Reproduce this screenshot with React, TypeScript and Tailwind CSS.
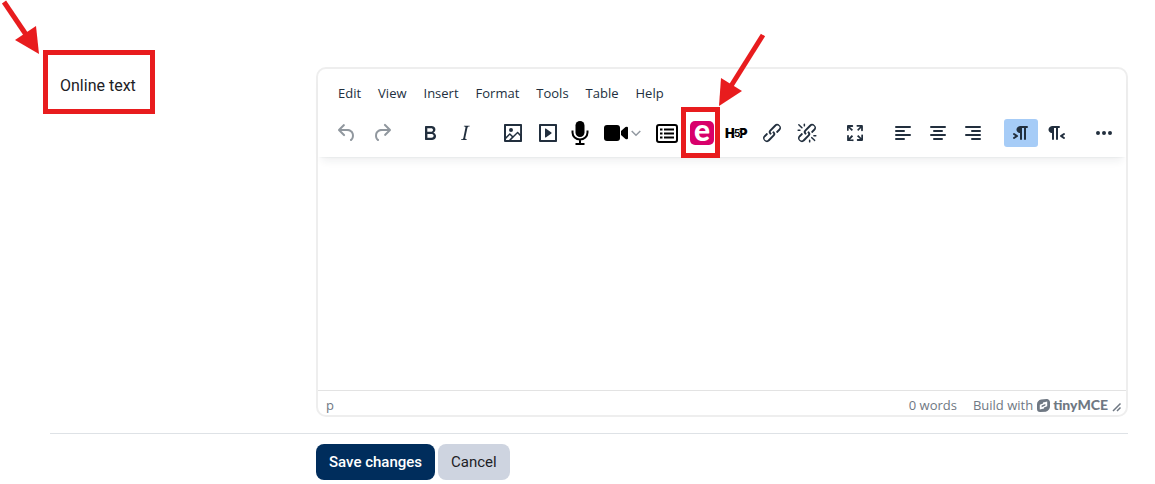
import type { ReactNode } from 'react';

interface ToolButtonProps {
  label: string;
  active?: boolean;
  disabled?: boolean;
  wide?: string;
  children: ReactNode;
}

const ICONS = {
  undo: 'M6.4 8H12c3.7 0 6.2 2 6.8 5.1.6 2.7-.4 5.6-2.3 6.8a1 1 0 0 1-1-1.8c1.1-.6 1.8-2.7 1.4-4.6-.5-2.1-2.1-3.5-4.9-3.5H6.4l3.3 3.3a1 1 0 1 1-1.4 1.4l-5-5a1 1 0 0 1 0-1.4l5-5a1 1 0 0 1 1.4 1.4L6.4 8Z',
  redo: 'M17.6 10H12c-2.8 0-4.4 1.4-4.9 3.5-.4 2 .3 4 1.4 4.6a1 1 0 1 1-1 1.8c-2-1.2-2.9-4.1-2.3-6.8.6-3 3-5.1 6.8-5.1h5.6l-3.3-3.3a1 1 0 1 1 1.4-1.4l5 5a1 1 0 0 1 0 1.4l-5 5a1 1 0 0 1-1.4-1.4l3.3-3.3Z',
  bold: 'M7.8 19c-.3 0-.5 0-.6-.2l-.2-.5V5.7c0-.2 0-.4.2-.5l.6-.2h5c1.5 0 2.7.3 3.5 1 .7.6 1.1 1.4 1.1 2.5a3 3 0 0 1-.6 1.9c-.4.6-1 1-1.6 1.2.4.1.9.3 1.3.6s.8.7 1 1.2c.4.4.5 1 .5 1.6 0 1.3-.4 2.3-1.3 3-.8.7-2.1 1-3.8 1H7.8Zm5-8.3c.6 0 1.2-.1 1.6-.5.4-.3.6-.7.6-1.3 0-1.1-.8-1.7-2.3-1.7H9.3v3.5h3.4Zm.5 6c.7 0 1.3-.1 1.7-.4.4-.4.6-.9.6-1.5s-.2-1-.7-1.4c-.4-.3-1-.4-2-.4H9.4v3.8h4Z',
  italic: 'm16.7 4.7-.1.9h-.3c-.6 0-1 0-1.4.3-.3.3-.4.6-.5 1.1l-2.1 9.8v.6c0 .5.4.8 1.4.8h.2l-.2.8H8l.2-.8h.2c1.1 0 1.8-.5 2-1.5l2-9.8.1-.5c0-.6-.4-.8-1.4-.8h-.3l.2-.9h5.8Z',
  image: 'm5 15.7 3.3-3.2c.3-.3.7-.3 1 0L12 15l4.1-4c.3-.4.8-.4 1 0l2 1.9V5H5v10.7ZM5 18V19h3l2.8-2.9-2-2L5 17.9Zm14-3-2.5-2.4-6.4 6.5H19v-4ZM4 3h16c.6 0 1 .4 1 1v16c0 .6-.4 1-1 1H4a1 1 0 0 1-1-1V4c0-.6.4-1 1-1Zm6 8a2 2 0 1 0 0-4 2 2 0 0 0 0 4Z',
  media: 'M4 3h16c.6 0 1 .4 1 1v16c0 .6-.4 1-1 1H4a1 1 0 0 1-1-1V4c0-.6.4-1 1-1Zm1 2v14h14V5H5Zm4.8 2.6 5.6 4a.5.5 0 0 1 0 .8l-5.6 4A.5.5 0 0 1 9 16V8a.5.5 0 0 1 .8-.4Z',
  link: 'M6.2 12.3a1 1 0 0 1 1.4 1.4l-2 2a2 2 0 1 0 2.6 2.8l4.8-4.8a1 1 0 0 0 0-1.4 1 1 0 1 1 1.4-1.3 2.9 2.9 0 0 1 0 4L9.6 20a3.9 3.9 0 0 1-5.5-5.5l2-2Zm11.6-.6a1 1 0 0 1-1.4-1.4l2-2a2 2 0 1 0-2.6-2.8L11 10.3a1 1 0 0 0 0 1.4A1 1 0 1 1 9.6 13a2.9 2.9 0 0 1 0-4L14.4 4a3.9 3.9 0 0 1 5.5 5.5l-2 2Z',
  breaks: 'M7.6 6.3a.8.8 0 0 1-1 1.1L3.3 4.2a.7.7 0 1 1 1-1l3.2 3.1ZM5.1 8.6a.8.8 0 0 1 0 1.5H3a.8.8 0 0 1 0-1.5H5Zm5-3.5a.8.8 0 0 1-1.5 0V3a.8.8 0 0 1 1.5 0V5Zm6 11.8a.8.8 0 0 1 1-1l3.2 3.2a.8.8 0 0 1-1 1L16 17Zm-2.2 2a.8.8 0 0 1 1.5 0V21a.8.8 0 0 1-1.5 0V19Zm5-3.5a.7.7 0 1 1 0-1.5H21a.8.8 0 0 1 0 1.5H19Z',
  fullscreen: 'm15.3 10-1.2-1.3 2.9-3h-2.3a.9.9 0 1 1 0-1.7H19c.5 0 .9.4.9.9v4.4a.9.9 0 1 1-1.8 0V7l-2.9 3Zm0 4 3 3v-2.3a.9.9 0 1 1 1.7 0V19c0 .5-.4.9-.9.9h-4.4a.9.9 0 1 1 0-1.8H17l-3-2.9 1.3-1.2ZM10 15.4l-2.9 3h2.3a.9.9 0 1 1 0 1.7H5a.9.9 0 0 1-.9-.9v-4.4a.9.9 0 1 1 1.8 0V17l2.9-3 1.2 1.3ZM8.7 10 5.7 7v2.3a.9.9 0 0 1-1.7 0V5c0-.5.4-.9.9-.9h4.4a.9.9 0 0 1 0 1.8H7l3 2.9-1.3 1.2Z',
  alignLeft: 'M5 5h14a1 1 0 0 1 0 2H5a1 1 0 1 1 0-2Zm0 4h8a1 1 0 0 1 0 2H5a1 1 0 1 1 0-2Zm0 8h8a1 1 0 0 1 0 2H5a1 1 0 0 1 0-2Zm0-4h14a1 1 0 0 1 0 2H5a1 1 0 0 1 0-2Z',
  alignCenter: 'M5 5h14a1 1 0 0 1 0 2H5a1 1 0 1 1 0-2Zm3 4h8a1 1 0 0 1 0 2H8a1 1 0 1 1 0-2Zm0 8h8a1 1 0 0 1 0 2H8a1 1 0 0 1 0-2Zm-3-4h14a1 1 0 0 1 0 2H5a1 1 0 0 1 0-2Z',
  alignRight: 'M5 5h14a1 1 0 0 1 0 2H5a1 1 0 1 1 0-2Zm6 4h8a1 1 0 0 1 0 2h-8a1 1 0 0 1 0-2Zm0 8h8a1 1 0 0 1 0 2h-8a1 1 0 0 1 0-2Zm-6-4h14a1 1 0 0 1 0 2H5a1 1 0 0 1 0-2Z',
  ltr: 'M11 5h7a1 1 0 0 1 0 2h-1v11a1 1 0 0 1-2 0V7h-2v11a1 1 0 0 1-2 0v-6c-.5 0-1 0-1.4-.3A3.4 3.4 0 0 1 7.8 10a3.3 3.3 0 0 1 0-2.8 3.4 3.4 0 0 1 1.8-1.8L11 5ZM4.4 16.2 6.2 15l-1.8-1.2a1 1 0 0 1 1.2-1.6l3 2a1 1 0 0 1 0 1.6l-3 2a1 1 0 1 1-1.2-1.6Z',
  rtl: 'M8 5h7a1 1 0 0 1 0 2h-1v11a1 1 0 0 1-2 0V7h-2v11a1 1 0 0 1-2 0v-6c-.5 0-1 0-1.4-.3A3.4 3.4 0 0 1 4.8 10a3.3 3.3 0 0 1 0-2.8 3.4 3.4 0 0 1 1.8-1.8L8 5Zm12.600 11.200L18.800 15l1.800-1.200a1 1 0 0 0-1.200-1.600l-3 2a1 1 0 0 0 0 1.600l3 2a1 1 0 1 0 1.200-1.600Z',
  more: 'M6 10a2 2 0 1 0 0 4 2 2 0 0 0 0-4Zm12 0a2 2 0 1 0 0 4 2 2 0 0 0 0-4Zm-6 0a2 2 0 1 0 0 4 2 2 0 0 0 0-4Z',
};

const MENUS = ['Edit', 'View', 'Insert', 'Format', 'Tools', 'Table', 'Help'];

function Icon({ d }: { d: string }) {
  return (
    <svg width="24" height="24" viewBox="0 0 24 24" fill="currentColor" fillRule="evenodd" aria-hidden="true">
      <path d={d} />
    </svg>
  );
}

function ToolButton({ label, active, disabled, wide = 'w-[34px]', children }: ToolButtonProps) {
  return (
    <button
      type="button"
      aria-label={label}
      aria-pressed={active}
      disabled={disabled}
      className={`flex h-7 shrink-0 items-center justify-center rounded-[3px] ${wide} ${
        active ? 'bg-[#a6ccf7]' : ''
      } ${disabled ? 'text-[#222f3e]/50' : 'text-[#222f3e]'}`}
    >
      {children}
    </button>
  );
}

function Group({ children }: { children: ReactNode }) {
  return <div className="flex gap-px">{children}</div>;
}

function Logo() {
  return (
    <a href="#tinymce" aria-label="tinyMCE" className="flex items-center gap-[3px] text-[#6f7883]">
      <svg width="13" height="13" viewBox="0 0 13 13" aria-hidden="true">
        <path
          d="M4.2.4 9.5 0A3.3 3.3 0 0 1 13 3.400v4.200c0 1.800-1 3.500-2.600 4.300L8.800 12.700 3.400 13A3.300 3.300 0 0 1 0 9.700V5.200C0 2.800 1.800.8 4.200.4Z"
          fill="currentColor"
        />
        <path d="M2.800 5.800 6 4.600V3.400l4.200 -.8v4.600L7 8.400v1.200l-4.200.8Z" fill="#fff" />
        <path d="M4.600 6.600 8.400 5v1.600L4.600 8.200Z" fill="currentColor" />
      </svg>
      <span className="font-[Lato,sans-serif] text-[14px] leading-4 font-black">tinyMCE</span>
    </a>
  );
}

export default function App() {
  return (
    <main className="bg-white pt-[67px] pr-[27px] pb-1 pl-[50px] font-[Roboto,sans-serif] text-[#1d2125]">
      <form>
        <div className="flex border-b border-[#dee2e6] pb-4">
          <div className="w-[266px] shrink-0 pt-1.5">
            <div className="relative inline-block px-2.5 py-px">
              <label htmlFor="online-text" className="text-base">
                Online text
              </label>
              <span className="pointer-events-none absolute -top-[23px] -left-[7px] h-16 w-28 border-5 border-[#e81c1e]" />
              <svg className="pointer-events-none absolute -top-[74px] -left-[50px]" width="44" height="56" aria-hidden="true">
                <path d="M4 3 27 37" stroke="#e81c1e" strokeWidth="5" />
                <path d="M39 55 15 41 36 27Z" fill="#e81c1e" />
              </svg>
            </div>
          </div>

          <div className="flex h-[350px] min-w-0 flex-1 flex-col rounded-[10px] border-2 border-[#eee]">
            <div className="flex flex-col px-3 pt-2.5 pb-2.5 shadow-[0_2px_2px_-2px_rgba(34,47,62,0.1),0_8px_8px_-4px_rgba(34,47,62,0.07)]">
              <div className="flex h-7 items-center gap-px">
                {MENUS.map((menu) => (
                  <button
                    key={menu}
                    type="button"
                    className="px-2 font-['Open_Sans',sans-serif] text-[13px] leading-7 text-[#222f3e]"
                  >
                    {menu}
                  </button>
                ))}
              </div>
              <div className="mt-3 flex gap-[14px]" role="toolbar" aria-label="Formatting">
                <Group>
                  <ToolButton label="Undo" disabled><Icon d={ICONS.undo} /></ToolButton>
                  <ToolButton label="Redo" disabled><Icon d={ICONS.redo} /></ToolButton>
                </Group>
                <Group>
                  <ToolButton label="Bold"><Icon d={ICONS.bold} /></ToolButton>
                  <ToolButton label="Italic"><Icon d={ICONS.italic} /></ToolButton>
                </Group>
                <Group>
                  <ToolButton label="Image"><Icon d={ICONS.image} /></ToolButton>
                  <ToolButton label="Multimedia"><Icon d={ICONS.media} /></ToolButton>
                  <ToolButton label="Record audio" wide="w-7">
                    <svg width="18" height="24" viewBox="0 0 18 24" aria-hidden="true">
                      <rect x="4.5" y="0" width="9" height="16" rx="4.5" />
                      <path d="M1.5 9.5v2a7.5 7 0 0 0 15 0v-2M9 18.5V23M4.500 23h9" fill="none" stroke="#000" strokeWidth="2" />
                    </svg>
                  </ToolButton>
                  <ToolButton label="Record video" wide="w-[54px]">
                    <svg width="25" height="18" viewBox="0 0 25 18" aria-hidden="true">
                      <rect x="1" y="1" width="16" height="16" rx="3" />
                      <path d="M18 7 22.500 3Q25 2 25 4v10q0 2-2.500 1L18 11Z" />
                    </svg>
                    <svg className="ml-[3px]" width="10" height="10" viewBox="0 0 10 10" aria-hidden="true">
                      <path d="M.7 3 5 7.200 9.300 3" fill="none" stroke="#9299a1" strokeWidth="1.500" />
                    </svg>
                  </ToolButton>
                  <ToolButton label="Insert list">
                    <svg width="22" height="20" viewBox="0 0 22 20" fill="none" stroke="#000" strokeWidth="2" aria-hidden="true">
                      <rect x="1" y="2" width="20" height="17" rx="2" />
                      <path d="M4 6.500h2.500M4 10.500h2.500M4 14.500h2.500M8 6.500h10M8 10.500h10M8 14.500h10" />
                    </svg>
                  </ToolButton>
                  <div className="relative">
                    <ToolButton label="Embed content">
                      <svg className="overflow-visible" width="24" height="24" viewBox="0 0 24 24" aria-hidden="true">
                        <rect width="24" height="24" rx="5" fill="#d8006b" />
                        <text x="12" y="20" textAnchor="middle" fontFamily="Lato" fontWeight="900" fontSize="30" fill="#fff">e</text>
                      </svg>
                    </ToolButton>
                    <span className="pointer-events-none absolute -top-3 -left-1 h-[51px] w-[39px] border-5 border-[#e81c1e]" />
                    <svg className="pointer-events-none absolute -top-[87px] left-8" width="50" height="76" aria-hidden="true">
                      <path d="M46 3 14 54" stroke="#e81c1e" strokeWidth="5" />
                      <path d="M2 74 4 46 25 59Z" fill="#e81c1e" />
                    </svg>
                  </div>
                  <ToolButton label="H5P">
                    <svg className="overflow-visible" width="24" height="12" viewBox="0 0 24 12" fontFamily="Inter" fontWeight="900" aria-hidden="true">
                      <text x="0" y="11" fontSize="13">H</text>
                      <text x="14" y="11" fontSize="13">P</text>
                      <path d="M8 5h3v2H8Z" />
                      <text x="9" y="10" fontSize="10" fontWeight="700" stroke="#fff" strokeWidth="1" paintOrder="stroke">5</text>
                    </svg>
                  </ToolButton>
                  <ToolButton label="Link"><Icon d={ICONS.link} /></ToolButton>
                  <ToolButton label="Unlink"><Icon d={ICONS.link + ICONS.breaks} /></ToolButton>
                </Group>
                <Group>
                  <ToolButton label="Fullscreen"><Icon d={ICONS.fullscreen} /></ToolButton>
                </Group>
                <Group>
                  <ToolButton label="Align left"><Icon d={ICONS.alignLeft} /></ToolButton>
                  <ToolButton label="Align center"><Icon d={ICONS.alignCenter} /></ToolButton>
                  <ToolButton label="Align right"><Icon d={ICONS.alignRight} /></ToolButton>
                </Group>
                <Group>
                  <ToolButton label="Left to right" active><Icon d={ICONS.ltr} /></ToolButton>
                  <ToolButton label="Right to left"><Icon d={ICONS.rtl} /></ToolButton>
                </Group>
                <Group>
                  <ToolButton label="More"><Icon d={ICONS.more} /></ToolButton>
                </Group>
              </div>
            </div>

            <textarea id="online-text" className="w-full flex-1 resize-none px-3 py-4 outline-none" />

            <div className="flex h-[25px] items-center border-t border-[#e3e3e3] pt-1 pr-1 pl-2 font-['Open_Sans',sans-serif] text-[13px] leading-5 text-[#6f7883]">
              <span className="flex-1">p</span>
              <span>0 words</span>
              <span className="mr-1 ml-4">Build with</span>
              <Logo />
              <svg className="ml-1 self-end" width="10" height="14" viewBox="0 0 10 14" fill="none" stroke="currentColor" strokeWidth="1.5" aria-hidden="true">
                <path d="M1 10 8.500 2.500M5 10 8.500 6.500" />
              </svg>
            </div>
          </div>
        </div>

        <div className="mt-2.5 flex gap-[3px] pl-[266px] text-[15px] leading-6">
          <button type="button" className="h-9 rounded-lg bg-[#002d5c] px-[13px] font-medium text-white">
            Save changes
          </button>
          <button type="button" className="h-9 rounded-lg bg-[#ced4e0] px-[13px]">
            Cancel
          </button>
        </div>
      </form>
    </main>
  );
}
